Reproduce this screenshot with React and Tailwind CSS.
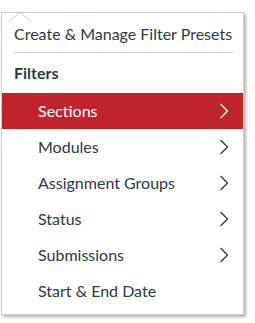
import React from "react";

const Chevron = ({ color = "#2d3b45" }) => (
  <svg width="10" height="16" viewBox="0 0 10 16" fill="none">
    <path d="M1.5 1 L8.5 8 L1.5 15" stroke={color} strokeWidth="1.3" />
  </svg>
);

const items = [
  { label: "Sections", sub: true, active: true },
  { label: "Modules", sub: true },
  { label: "Assignment Groups", sub: true },
  { label: "Status", sub: true },
  { label: "Submissions", sub: true },
  { label: "Start & End Date", sub: false },
];

export default function App() {
  return (
    <div className="w-[255px] h-[323px] bg-white pt-[3px] pl-[1px]" style={{ fontFamily: "Lato, 'Open Sans', sans-serif" }}>
      <div className="relative w-[243px]">
        <svg className="absolute left-[8px] top-0" width="24" height="10" viewBox="0 0 24 10">
          <path d="M0 9.5 L11 0.5 L22 9.5" fill="white" stroke="#c7cdd1" strokeWidth="1" />
        </svg>
        <div className="mt-[9px] border border-[#c7cdd1] bg-white shadow-[2px_2px_3px_rgba(0,0,0,0.3)]">
          <div className="pl-[12px] pr-[10px] pt-[7px]">
            <div className="h-[27px] flex items-center whitespace-nowrap text-[16px] text-[#2d3b45]">Create &amp; Manage Filter Presets</div>
            <div className="mt-[5px] border-t border-[#c7cdd1]" />
            <div className="h-[40px] flex items-center text-[16px] font-bold text-[#2d3b45]">Filters</div>
          </div>
          <div className="flex flex-col">
            {items.map((it) => (
              <div
                key={it.label}
                className={`h-[36px] flex items-center justify-between pl-[36px] pr-[14px] text-[16px] ${
                  it.active ? "bg-[#c0242b] text-white" : "text-[#2d3b45]"
                }`}
              >
                <span>{it.label}</span>
                {it.sub && <Chevron color={it.active ? "#ffffff" : "#2d3b45"} />}
              </div>
            ))}
          </div>
          <div className="h-[5px]" />
        </div>
      </div>
    </div>
  );
}
